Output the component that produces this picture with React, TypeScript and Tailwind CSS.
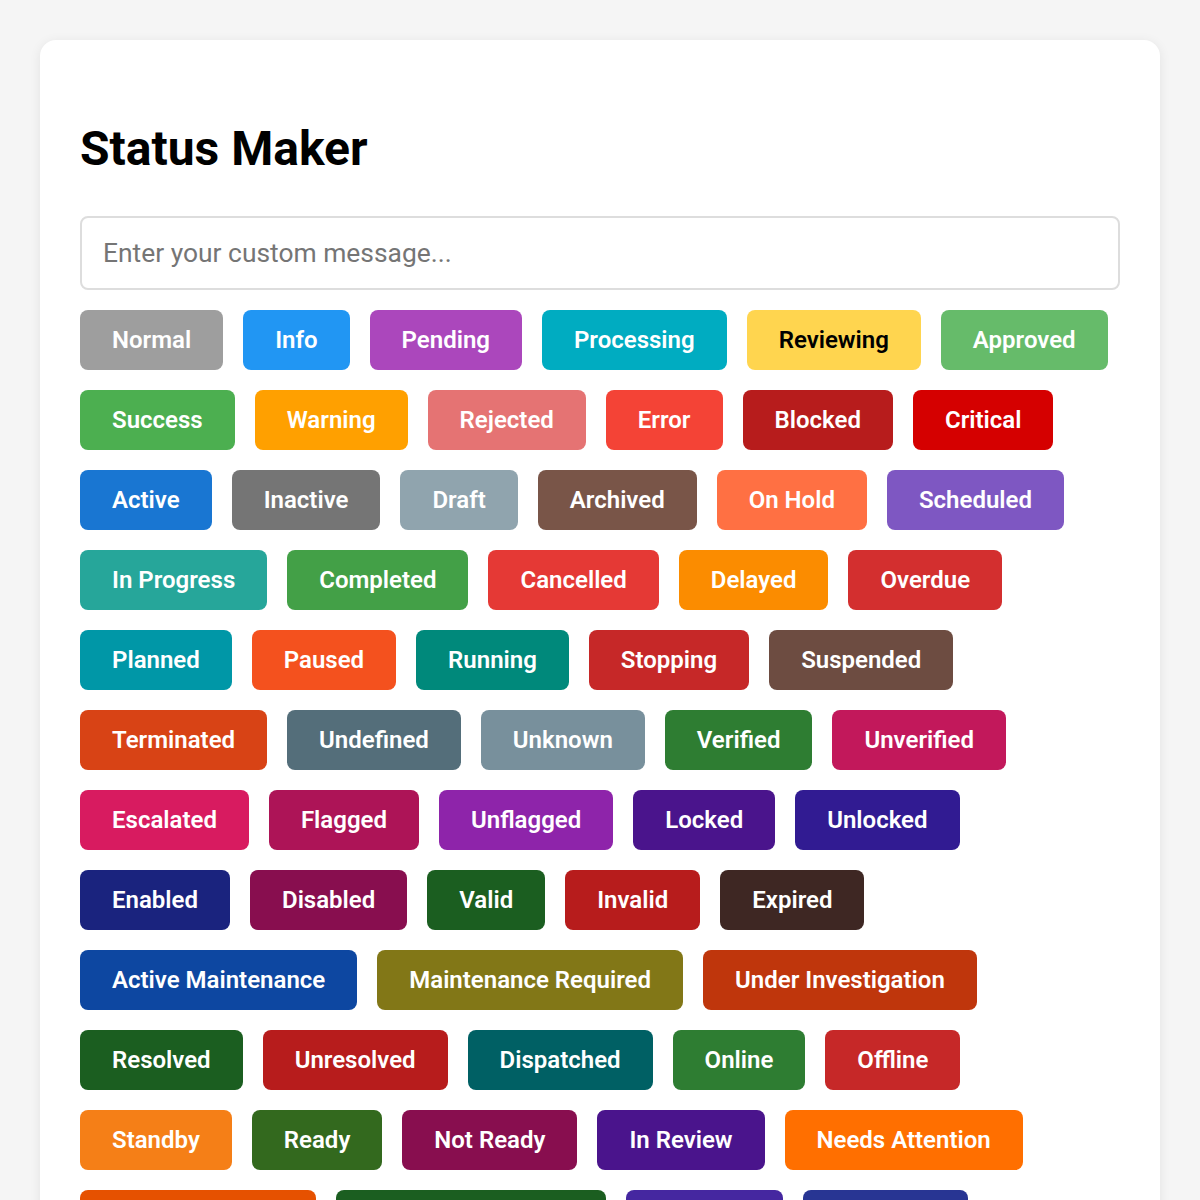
import React from "react";

type S = { label: string; bg: string; dark?: boolean };

const statuses: S[] = [
  { label: "Normal", bg: "bg-[#9e9e9e]" },
  { label: "Info", bg: "bg-[#2196f3]" },
  { label: "Pending", bg: "bg-[#ab47bc]" },
  { label: "Processing", bg: "bg-[#00acc1]" },
  { label: "Reviewing", bg: "bg-[#ffd54f]", dark: true },
  { label: "Approved", bg: "bg-[#66bb6a]" },
  { label: "Success", bg: "bg-[#4caf50]" },
  { label: "Warning", bg: "bg-[#ffa000]" },
  { label: "Rejected", bg: "bg-[#e57373]" },
  { label: "Error", bg: "bg-[#f44336]" },
  { label: "Blocked", bg: "bg-[#b71c1c]" },
  { label: "Critical", bg: "bg-[#d50000]" },
  { label: "Active", bg: "bg-[#1976d2]" },
  { label: "Inactive", bg: "bg-[#757575]" },
  { label: "Draft", bg: "bg-[#90a4ae]" },
  { label: "Archived", bg: "bg-[#795548]" },
  { label: "On Hold", bg: "bg-[#ff7043]" },
  { label: "Scheduled", bg: "bg-[#7e57c2]" },
  { label: "In Progress", bg: "bg-[#26a69a]" },
  { label: "Completed", bg: "bg-[#43a047]" },
  { label: "Cancelled", bg: "bg-[#e53935]" },
  { label: "Delayed", bg: "bg-[#fb8c00]" },
  { label: "Overdue", bg: "bg-[#d32f2f]" },
  { label: "Planned", bg: "bg-[#0097a7]" },
  { label: "Paused", bg: "bg-[#f4511e]" },
  { label: "Running", bg: "bg-[#00897b]" },
  { label: "Stopping", bg: "bg-[#c62828]" },
  { label: "Suspended", bg: "bg-[#6d4c41]" },
  { label: "Terminated", bg: "bg-[#d84315]" },
  { label: "Undefined", bg: "bg-[#546e7a]" },
  { label: "Unknown", bg: "bg-[#78909c]" },
  { label: "Verified", bg: "bg-[#2e7d32]" },
  { label: "Unverified", bg: "bg-[#c2185b]" },
  { label: "Escalated", bg: "bg-[#d81b60]" },
  { label: "Flagged", bg: "bg-[#ad1457]" },
  { label: "Unflagged", bg: "bg-[#8e24aa]" },
  { label: "Locked", bg: "bg-[#4a148c]" },
  { label: "Unlocked", bg: "bg-[#311b92]" },
  { label: "Enabled", bg: "bg-[#1a237e]" },
  { label: "Disabled", bg: "bg-[#880e4f]" },
  { label: "Valid", bg: "bg-[#1b5e20]" },
  { label: "Invalid", bg: "bg-[#b71c1c]" },
  { label: "Expired", bg: "bg-[#3e2723]" },
  { label: "Active Maintenance", bg: "bg-[#0d47a1]" },
  { label: "Maintenance Required", bg: "bg-[#827717]" },
  { label: "Under Investigation", bg: "bg-[#bf360c]" },
  { label: "Resolved", bg: "bg-[#1b5e20]" },
  { label: "Unresolved", bg: "bg-[#b71c1c]" },
  { label: "Dispatched", bg: "bg-[#006064]" },
  { label: "Online", bg: "bg-[#2e7d32]" },
  { label: "Offline", bg: "bg-[#c62828]" },
  { label: "Standby", bg: "bg-[#f57f17]" },
  { label: "Ready", bg: "bg-[#33691e]" },
  { label: "Not Ready", bg: "bg-[#880e4f]" },
  { label: "In Review", bg: "bg-[#4a148c]" },
  { label: "Needs Attention", bg: "bg-[#ff6f00]" },
  { label: "Action Required", bg: "bg-[#e65100]" },
  { label: "Awaiting Response", bg: "bg-[#1b5e20]" },
  { label: "Deferred", bg: "bg-[#4527a0]" },
  { label: "Assigned", bg: "bg-[#283593]" },
];

export default function App() {
  return (
    <div className="min-h-screen bg-[#f5f5f5] p-10 font-['Roboto',sans-serif]">
      <div className="rounded-2xl bg-white p-10 shadow-[0_2px_12px_rgba(0,0,0,0.08)]">
        <h1 className="mt-10 text-[48px] font-bold leading-[1.2] text-black">Status Maker</h1>
        <input
          type="text"
          placeholder="Enter your custom message..."
          className="mt-[38px] block h-[74px] w-full rounded-lg border-2 border-[#dddddd] bg-white px-[21px] text-[26.4px] text-[#333] placeholder:text-[#757575] outline-none"
        />
        <div className="mt-5 flex flex-wrap gap-5">
          {statuses.map((s) => (
            <button
              key={s.label}
              className={`h-[60px] rounded-lg px-8 text-[24px] font-semibold ${s.bg} ${
                s.dark ? "text-black" : "text-white"
              }`}
            >
              {s.label}
            </button>
          ))}
        </div>
      </div>
    </div>
  );
}
